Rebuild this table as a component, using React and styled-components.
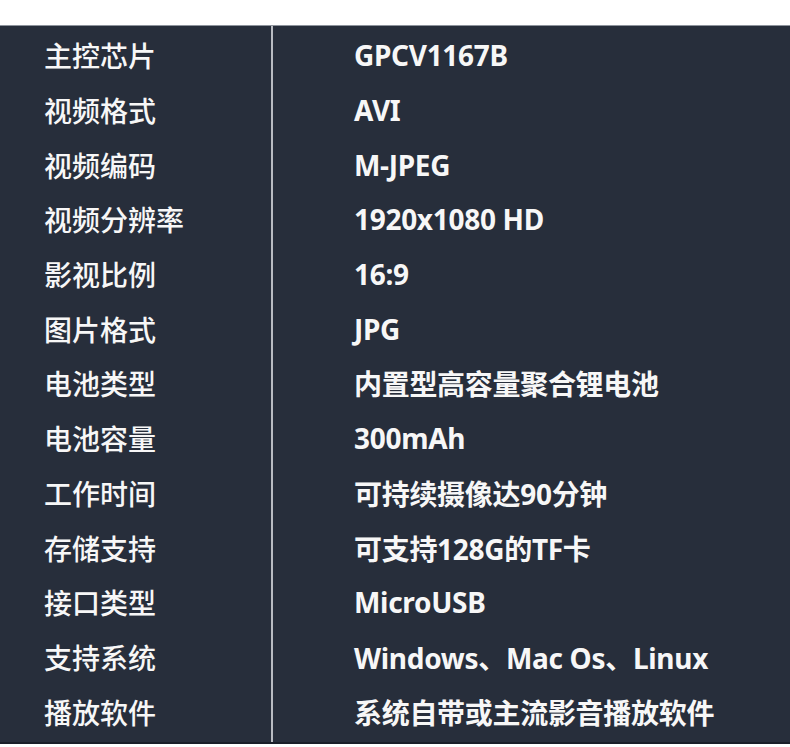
import React from "react";
import styled, { createGlobalStyle } from "styled-components";

const GlobalStyle = createGlobalStyle`
  html, body {
    margin: 0;
    padding: 0;
    background: #ffffff;
  }
`;

const Page = styled.div`
  width: 790px;
  height: 747px;
  padding-top: 25px;
  box-sizing: border-box;
  background: #ffffff;
  font-family: "Noto Sans", "Noto Sans CJK SC", sans-serif;
`;

const Table = styled.div`
  background: #272e3b;
  border-top: 1px solid #8d939c;
  border-bottom: 2px solid #1a1f29;
  display: grid;
  grid-template-columns: 271px 2px 1fr;
  grid-auto-rows: 54.7px;
  padding: 2px 0 3px;
`;

const Divider = styled.div`
  grid-column: 2;
  grid-row: 1 / span 13;
  margin: -2px 0 -3px;
  background: #b9bcc2;
`;

const Cell = styled.div`
  display: flex;
  align-items: center;
  color: #f7f7f7;
  font-size: 28px;
  white-space: nowrap;
  padding-left: ${(p) => (p.$value ? "81px" : "44px")};
  grid-column: ${(p) => (p.$value ? 3 : 1)};
  font-weight: ${(p) => (p.$value ? 700 : 500)};
  letter-spacing: ${(p) => (p.$value ? "-0.3px" : "0")};
  font-family: ${(p) =>
    p.$value
      ? `"Noto Sans", "Noto Sans CJK SC", sans-serif`
      : `"Noto Sans CJK SC", sans-serif`};
`;

const specs = [
  ["主控芯片", "GPCV1167B"],
  ["视频格式", "AVI"],
  ["视频编码", "M-JPEG"],
  ["视频分辨率", "1920x1080 HD"],
  ["影视比例", "16:9"],
  ["图片格式", "JPG"],
  ["电池类型", "内置型高容量聚合锂电池"],
  ["电池容量", "300mAh"],
  ["工作时间", "可持续摄像达90分钟"],
  ["存储支持", "可支持128G的TF卡"],
  ["接口类型", "MicroUSB"],
  ["支持系统", "Windows、Mac Os、Linux"],
  ["播放软件", "系统自带或主流影音播放软件"],
];

export default function App() {
  return (
    <Page>
      <GlobalStyle />
      <Table>
        <Divider />
        {specs.map(([label, value], i) => (
          <React.Fragment key={label}>
            <Cell style={{ gridRow: i + 1 }}>{label}</Cell>
            <Cell $value style={{ gridRow: i + 1 }}>
              {value}
            </Cell>
          </React.Fragment>
        ))}
      </Table>
    </Page>
  );
}
